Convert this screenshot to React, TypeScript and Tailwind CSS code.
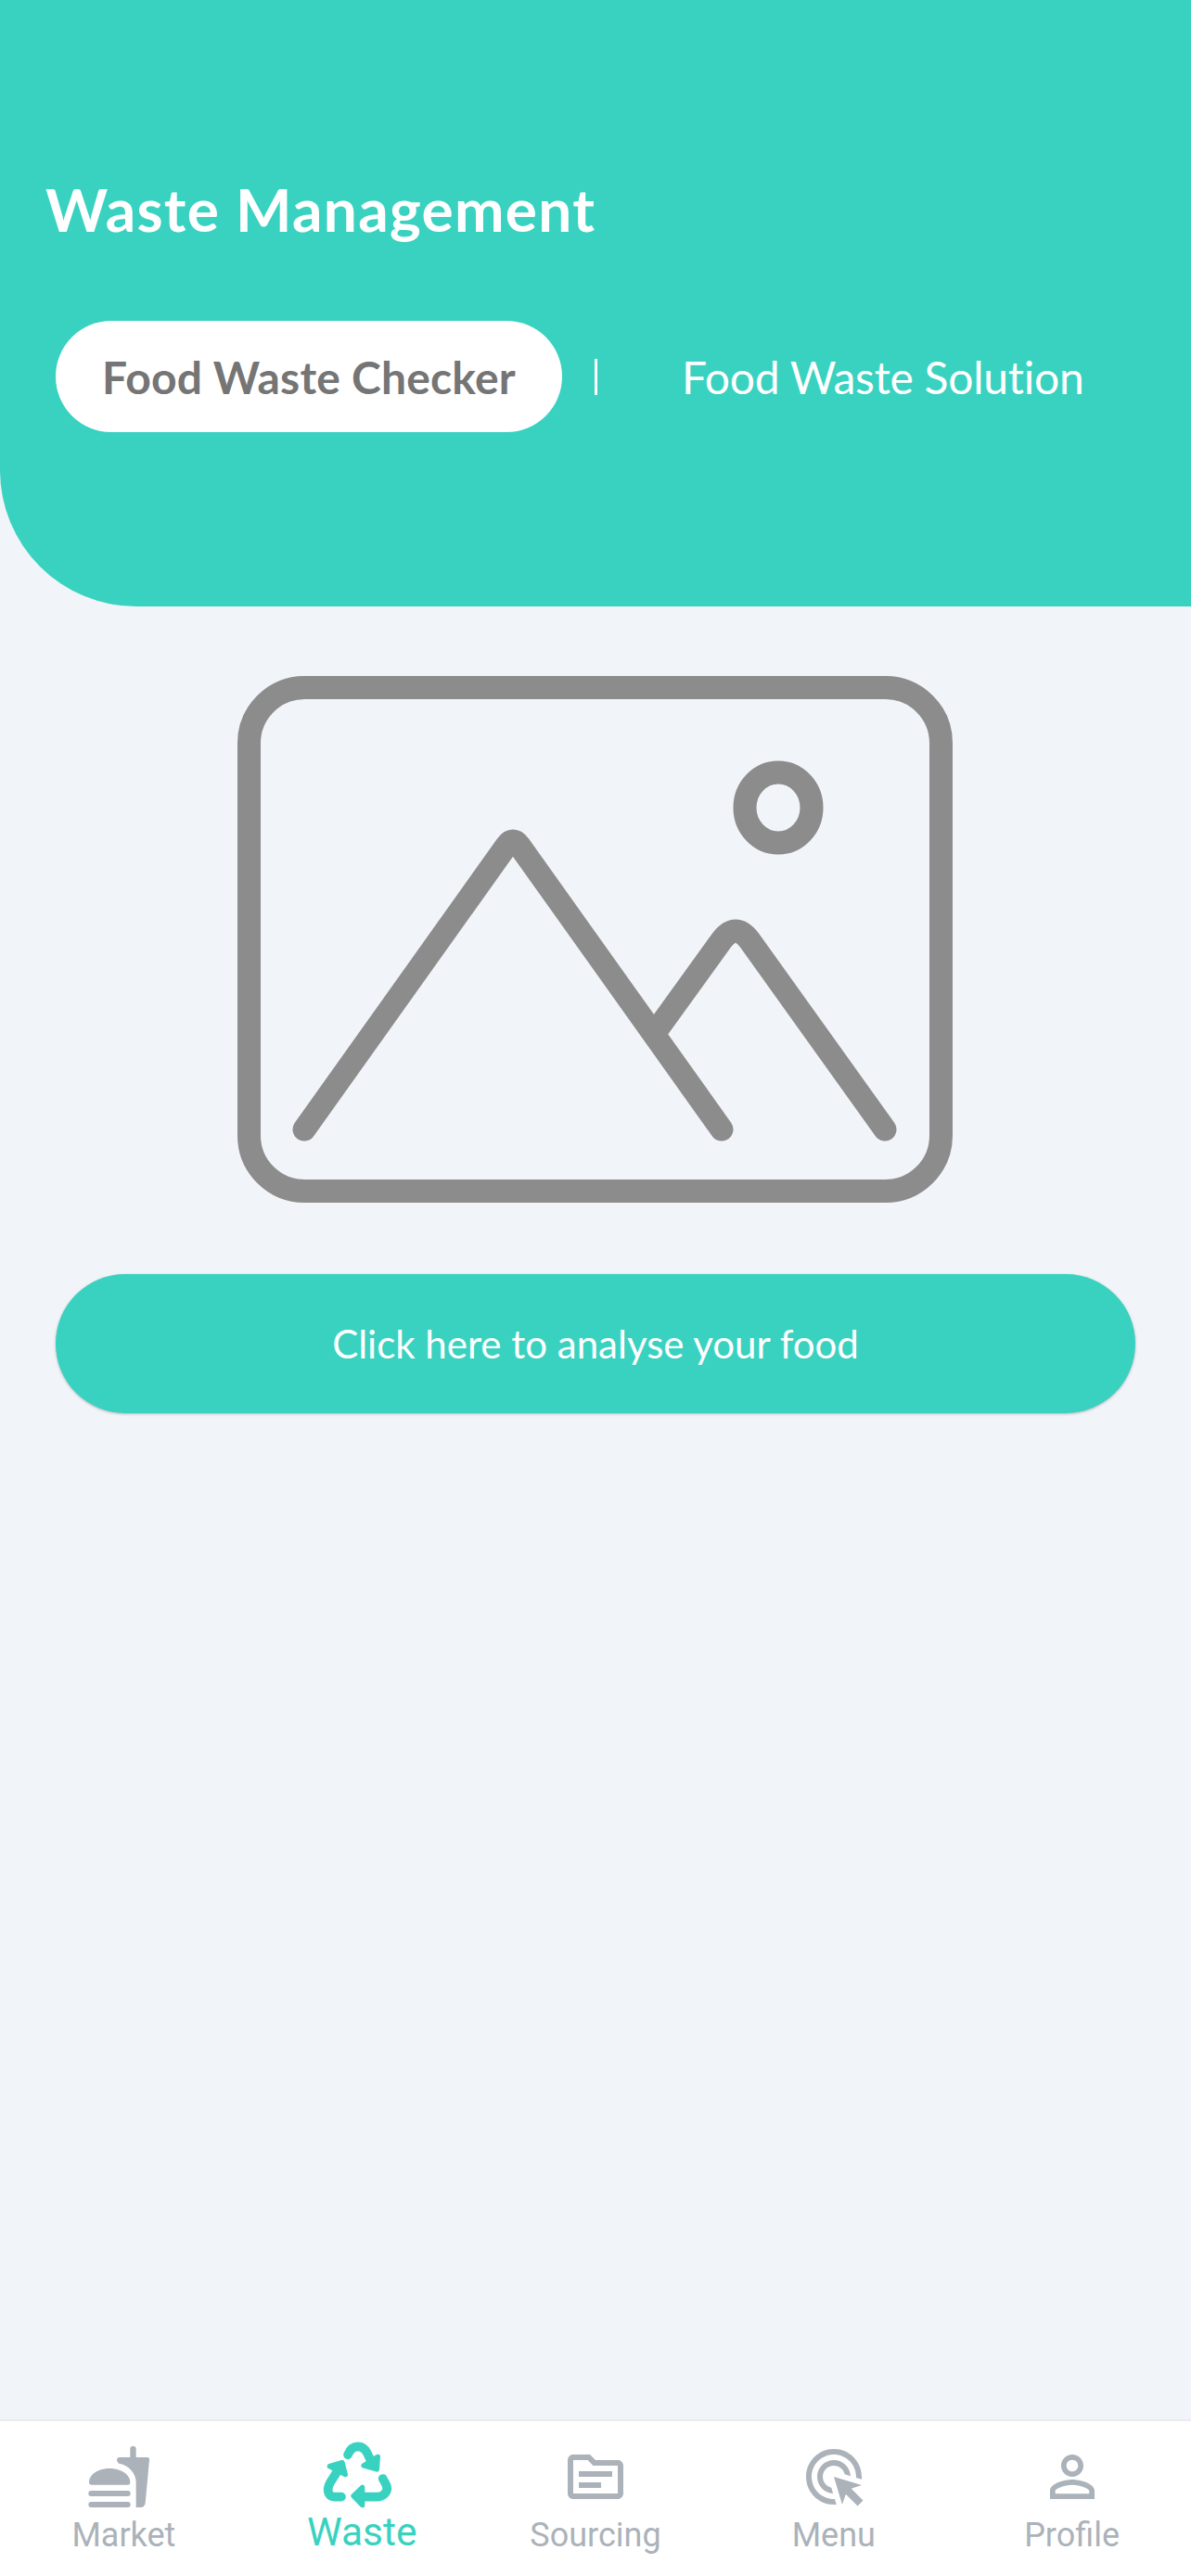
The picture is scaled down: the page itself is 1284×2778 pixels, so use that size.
function MarketIcon() {
  return (
    <svg viewBox="276 132 216 216" className="w-[72px] h-[72px] fill-[#abb2b9]">
      <path d="M288 258C288 232 318 213 354 213C390 213 421 232 421 258Q421 266 413 266H296Q288 266 288 258Z" />
      <rect x="286" y="285" width="136" height="18" rx="9" />
      <rect x="286" y="321" width="136" height="18" rx="9" />
      <rect x="421" y="141" width="19" height="50" rx="9" />
      <path d="M378 186Q378 177 387 177H476Q484 177 483 186L470 325Q468 339 455 339H440V258C440 232 420 203 385 197Q378 195 378 186Z" />
    </svg>
  );
}

function WasteIcon() {
  return (
    <svg viewBox="1035 117 240 240" className="w-[80px] h-[80px]" fill="none" stroke="#39d2c0" strokeLinecap="round" strokeLinejoin="round">
      <path d="M1125 172Q1135 146 1157 145Q1176 145 1187 165L1198 188" strokeWidth="29" />
      <path d="M1222 178L1176 207L1219 219Z" fill="#39d2c0" strokeWidth="16" />
      <path d="M1104 308H1082Q1060 306 1061 282Q1062 272 1068 262L1088 230" strokeWidth="29" />
      <path d="M1066 209L1107 197L1117 236Z" fill="#39d2c0" strokeWidth="16" />
      <path d="M1238 249L1247 265Q1258 285 1243 299Q1234 308 1220 308H1170" strokeWidth="29" />
      <path d="M1143 305L1172 277L1172 335Z" fill="#39d2c0" strokeWidth="16" />
    </svg>
  );
}

function SourcingIcon() {
  return (
    <svg viewBox="0 0 24 24" className="w-[72px] h-[72px] fill-[#abb2b9]">
      <path fillRule="evenodd" d="M20 6h-8l-2-2H4c-1.1 0-1.99.9-1.99 2L2 18c0 1.1.9 2 2 2h16c1.1 0 2-.9 2-2V8c0-1.1-.9-2-2-2zm0 12H4V6h5.17l2 2H20v10zM6 14h8v2H6zM6 10h12v2H6z" />
    </svg>
  );
}

function MenuIcon() {
  return (
    <svg viewBox="0 0 24 24" className="w-[72px] h-[72px] fill-[#abb2b9]">
      <path d="M11.71 17.99C8.53 17.84 6 15.22 6 12c0-3.31 2.69-6 6-6 3.22 0 5.84 2.53 5.99 5.71l-2.1-.63C15.48 9.31 13.89 8 12 8c-2.21 0-4 1.79-4 4 0 1.89 1.31 3.48 3.08 3.89l.63 2.1zM22 12c0 .3-.01.6-.04.9l-1.97-.59c.01-.1.01-.21.01-.31 0-4.42-3.58-8-8-8s-8 3.58-8 8 3.58 8 8 8c.1 0 .21 0 .31-.01l.59 1.97c-.3.03-.6.04-.9.04-5.52 0-10-4.48-10-10S6.48 2 12 2s10 4.48 10 10zm-3.77 4.26L22 15l-10-3 3 10 1.26-3.77 4.27 4.27 1.98-1.98-4.28-4.26z" />
    </svg>
  );
}

function ProfileIcon() {
  return (
    <svg viewBox="0 0 24 24" className="w-[72px] h-[72px] fill-[#abb2b9]">
      <path d="M12 5.9c1.16 0 2.1.94 2.1 2.1s-.94 2.1-2.1 2.1S9.9 9.16 9.9 8s.94-2.1 2.1-2.1m0 9c2.97 0 6.1 1.46 6.1 2.1v1.1H5.9V17c0-.64 3.13-2.1 6.1-2.1M12 4C9.79 4 8 5.79 8 8s1.79 4 4 4 4-1.79 4-4-1.79-4-4-4zm0 9c-2.67 0-8 1.34-8 4v3h16v-3c0-2.66-5.33-4-8-4z" />
    </svg>
  );
}

function NavItem({ icon, label, shifted }: { icon: React.ReactNode; label: string; shifted?: boolean }) {
  return (
    <div className="flex flex-col items-center pt-[24px]">
      {icon}
      <span className={`mt-[7px] text-[36px] leading-[40px] text-[#abb2b9] ${shifted ? "ml-[10px]" : ""}`}>{label}</span>
    </div>
  );
}

export default function App() {
  return (
    <div className="w-[1284px] h-[2778px] flex flex-col bg-[#f1f4f8] font-['Roboto',sans-serif] overflow-hidden">
      <header className="h-[654px] shrink-0 bg-[#39d2c0] rounded-bl-[147px] pt-[186px] font-['Lato',sans-serif]">
        <h1 className="pl-[49px] text-[64px] leading-[80px] font-bold tracking-[1.3px] text-white">Waste Management</h1>
        <div className="flex items-center mt-[80px] pl-[60px]">
          <div className="w-[546px] h-[120px] bg-white rounded-full flex items-center justify-center pt-[2px] text-[48px] font-bold tracking-[0.2px] text-[#757575]">
            Food Waste Checker
          </div>
          <div className="ml-[35px] w-[3px] h-[39px] bg-white" />
          <div className="ml-[91px] pt-[2px] text-[48px] tracking-[-0.25px] text-white">Food Waste Solution</div>
        </div>
      </header>

      <main className="flex-1 flex flex-col items-center pt-[75px]">
        <svg viewBox="0 0 771 568" className="w-[771px] h-[568px] -ml-[2px]" fill="none" stroke="#8c8c8c" strokeWidth="25" strokeLinecap="round" strokeLinejoin="round">
          <rect x="12.5" y="12.5" width="746" height="543" rx="60" />
          <ellipse cx="583" cy="142" rx="36" ry="38" />
          <path d="M72 489L290 183Q297 173 304 183L522 489" />
          <path d="M452 382L522 285Q537 265 552 285L698 489" />
        </svg>
        <button className="mt-[77px] w-[1164px] h-[150px] rounded-full bg-[#39d2c0] text-white text-[42px] font-['Lato',sans-serif] shadow-[0_1px_3px_rgba(0,0,0,0.25)]">
          Click here to analyse your food
        </button>
      </main>

      <nav className="h-[169px] shrink-0 bg-white border-t-2 border-[#e9ebee] grid grid-cols-5">
        <NavItem icon={<MarketIcon />} label="Market" shifted />
        <div className="flex flex-col items-center pt-[18px]">
          <WasteIcon />
          <span className="ml-[10px] -mt-[2px] text-[42.5px] leading-[48px] text-[#39d2c0]">Waste</span>
        </div>
        <NavItem icon={<SourcingIcon />} label="Sourcing" />
        <NavItem icon={<MenuIcon />} label="Menu" />
        <NavItem icon={<ProfileIcon />} label="Profile" />
      </nav>
    </div>
  );
}
